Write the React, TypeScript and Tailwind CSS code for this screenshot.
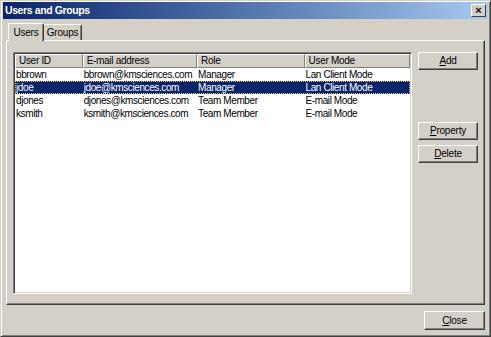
const FONT = { fontFamily: '"Liberation Sans", Arial, sans-serif' };

const users = [
  { id: "bbrown", email: "bbrown@kmsciences.com", role: "Manager", mode: "Lan Client Mode" },
  { id: "jdoe", email: "jdoe@kmsciences.com", role: "Manager", mode: "Lan Client Mode" },
  { id: "djones", email: "djones@kmsciences.com", role: "Team Member", mode: "E-mail Mode" },
  { id: "ksmith", email: "ksmith@kmsciences.com", role: "Team Member", mode: "E-mail Mode" },
];

const cols = ["w-[68px]", "w-[115px]", "w-[108px]", "w-[106px]"];

function Btn({ label, accel, className = "" }: { label: string; accel: number; className?: string }) {
  return (
    <button
      className={`h-[18px] w-[60px] bg-[#d4d0c8] border border-t-white border-l-white border-r-[#404040] border-b-[#404040] shadow-[inset_-1px_-1px_0_#808080] text-[10px] tracking-[-0.2px] text-black leading-none flex items-center justify-center ${className}`}
    >
      {label.slice(0, accel)}
      <span className="underline">{label[accel]}</span>
      {label.slice(accel + 1)}
    </button>
  );
}

export default function App() {
  return (
    <div style={FONT} className="w-[491px] h-[337px] bg-[#d4d0c8] flex flex-col border border-t-[#d4d0c8] border-l-[#d4d0c8] border-r-[#404040] border-b-[#404040] shadow-[inset_1px_1px_0_#fff,inset_-1px_-1px_0_#808080] px-[2px] pt-[1px] overflow-hidden">
      {/* Title bar */}
      <div className="h-[17px] flex items-center justify-between bg-gradient-to-r from-[#0a246a] to-[#a6caf0] pl-[2px] pr-[2px]">
        <span className="text-[10.5px] font-bold tracking-[-0.4px] text-white leading-none">Users and Groups</span>
        <div className="w-[15px] h-[13px] bg-[#d4d0c8] border border-t-white border-l-white border-r-[#404040] border-b-[#404040] flex items-center justify-center text-[11px] font-bold leading-none text-black">
          ×
        </div>
      </div>

      <div className="flex-1 flex flex-col px-[3px] pt-[3px]">
        {/* Tabs */}
        <div className="flex items-end h-[18px] pl-[2px] relative z-10">
          <div className="h-[18px] w-[36px] -mb-[1px] bg-[#d4d0c8] border border-b-0 border-t-white border-l-white border-r-[#404040] rounded-t-[2px] text-[10px] tracking-[-0.2px] text-black flex items-center justify-center leading-none shadow-[inset_-1px_0_0_#808080]">
            Users
          </div>
          <div className="h-[16px] w-[38px] bg-[#d4d0c8] border border-b-0 border-t-white border-l-0 border-r-[#404040] rounded-tr-[2px] text-[10px] tracking-[-0.2px] text-black flex items-center justify-center leading-none shadow-[inset_-1px_0_0_#808080]">
            Groups
          </div>
        </div>

        {/* Tab panel */}
        <div className="w-[479px] h-[265px] border border-t-white border-l-white border-r-[#404040] border-b-[#404040] shadow-[inset_-1px_-1px_0_#808080] flex pl-[6px] pt-[11px] gap-[6px]">
          {/* List view */}
          <div className="w-[399px] h-[242px] bg-white border border-t-[#808080] border-l-[#808080] border-r-white border-b-white shadow-[inset_1px_1px_0_#404040,inset_-1px_-1px_0_#d4d0c8] p-[1px]">
            <div className="flex h-[14px]">
              {["User ID", "E-mail address", "Role", "User Mode"].map((h, i) => (
                <div
                  key={h}
                  className={`${cols[i]} h-[14px] bg-[#d4d0c8] border border-t-white border-l-white border-r-[#808080] border-b-[#808080] text-[10px] tracking-[-0.3px] text-black leading-none flex items-center pl-[3px]`}
                >
                  {h}
                </div>
              ))}
            </div>
            {users.map((u, r) => {
              const sel = r === 1;
              return (
                <div
                  key={u.id}
                  className={`flex h-[13px] text-[10px] tracking-[-0.4px] leading-none items-center ${sel ? "bg-[#0a246a] text-white outline outline-1 outline-dotted outline-[#f0c060] -outline-offset-1" : "text-black"}`}
                >
                  {[u.id, u.email, u.role, u.mode].map((v, i) => (
                    <div key={i} className={`${cols[i]} pl-[1px] whitespace-nowrap overflow-hidden`}>
                      {v}
                    </div>
                  ))}
                </div>
              );
            })}
          </div>

          {/* Side buttons */}
          <div className="flex flex-col">
            <Btn label="Add" accel={0} />
            <div className="h-[52px]" />
            <Btn label="Property" accel={0} />
            <Btn label="Delete" accel={0} className="mt-[5px]" />
          </div>
        </div>

        {/* Footer */}
        <div className="flex justify-end pt-[6px]">
          <Btn label="Close" accel={0} className="w-[61px] h-[19px]" />
        </div>
      </div>
    </div>
  );
}
